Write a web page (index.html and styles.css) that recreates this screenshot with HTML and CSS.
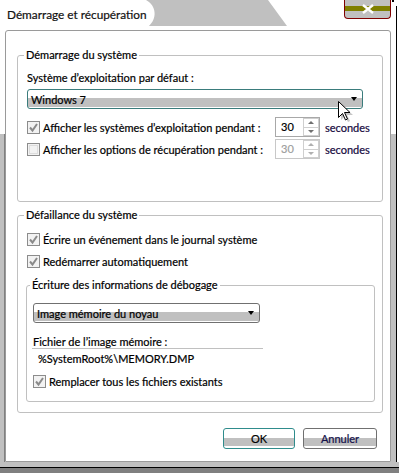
FILE: index.html
```html
<!DOCTYPE html>
<html lang="fr">
<head>
    <meta charset="UTF-8">
    <title>Démarrage et récupération</title>
    <link rel="stylesheet" href="styles.css">
</head>
<body>

    <div class="window">
        <div class="titlebar">
            <!-- Glaseffekt hinter dem Titel -->
            <svg class="glass" width="399" height="30" viewBox="0 0 399 30">
                <path d="M146 0H268L287 26H149C157 19 157 6 146 0Z" fill="#c0c0c0"/>
            </svg>
            <span class="title">Démarrage et récupération</span>
            <div class="close-btn">
                <svg width="12" height="10" viewBox="0 0 12 10">
                    <path d="M1 1L11 9M11 1L1 9" stroke="#fff" stroke-width="2.4"/>
                </svg>
            </div>
        </div>

        <div class="frame">
            <div class="edge edge-left"></div>

            <div class="panel">
                <fieldset class="group group-start">
                    <legend>Démarrage du système</legend>
                    <div class="label">Système d’exploitation par défaut :</div>
                    <div class="combo combo-os">
                        <span>Windows 7</span>
                        <span class="combo-arrow"></span>
                    </div>
                    <div class="row spin-row first">
                        <svg class="check" viewBox="0 0 13 13"><rect x="0.5" y="0.5" width="12" height="12" fill="#f2f2f2" stroke="#8c8c8c"/><path d="M3 6.5L5.5 9.5L10 3" fill="none" stroke="#8a8a8a" stroke-width="2"/></svg>
                        <span class="row-text">Afficher les systèmes d’exploitation pendant :</span>
                        <div class="spin">
                            <span class="spin-value">30</span>
                            <span class="spin-btns"><i class="up"></i><i class="down"></i></span>
                        </div>
                        <span class="unit">secondes</span>
                    </div>
                    <div class="row spin-row">
                        <svg class="check" viewBox="0 0 13 13"><rect x="0.5" y="0.5" width="12" height="12" fill="#f2f2f2" stroke="#8c8c8c"/><rect x="2.5" y="2.5" width="8" height="8" fill="none" stroke="#dcdcdc"/></svg>
                        <span class="row-text">Afficher les options de récupération pendant :</span>
                        <div class="spin disabled">
                            <span class="spin-value">30</span>
                            <span class="spin-btns"><i class="up"></i><i class="down"></i></span>
                        </div>
                        <span class="unit">secondes</span>
                    </div>
                </fieldset>

                <fieldset class="group group-failure">
                    <legend>Défaillance du système</legend>
                    <div class="row">
                        <svg class="check" viewBox="0 0 13 13"><rect x="0.5" y="0.5" width="12" height="12" fill="#f2f2f2" stroke="#8c8c8c"/><path d="M3 6.5L5.5 9.5L10 3" fill="none" stroke="#8a8a8a" stroke-width="2"/></svg>
                        <span>Écrire un événement dans le journal système</span>
                    </div>
                    <div class="row">
                        <svg class="check" viewBox="0 0 13 13"><rect x="0.5" y="0.5" width="12" height="12" fill="#f2f2f2" stroke="#8c8c8c"/><path d="M3 6.5L5.5 9.5L10 3" fill="none" stroke="#8a8a8a" stroke-width="2"/></svg>
                        <span>Redémarrer automatiquement</span>
                    </div>

                    <fieldset class="group group-debug">
                        <legend>Écriture des informations de débogage</legend>
                        <div class="combo combo-dump">
                            <span>Image mémoire du noyau</span>
                            <span class="combo-arrow"></span>
                        </div>
                        <div class="label dump-label">Fichier de l’image mémoire :</div>
                        <div class="dump-file">%SystemRoot%\MEMORY.DMP</div>
                        <div class="row debug-row">
                            <svg class="check" viewBox="0 0 13 13"><rect x="0.5" y="0.5" width="12" height="12" fill="#f2f2f2" stroke="#8c8c8c"/><path d="M3 6.5L5.5 9.5L10 3" fill="none" stroke="#8a8a8a" stroke-width="2"/></svg>
                            <span>Remplacer tous les fichiers existants</span>
                        </div>
                    </fieldset>
                </fieldset>

                <div class="buttons">
                    <button class="btn btn-ok">OK</button>
                    <button class="btn btn-cancel">Annuler</button>
                </div>
            </div>

            <div class="edge edge-right"></div>
        </div>

        <div class="bottom-edge"></div>

        <!-- Mauszeiger über der Liste -->
        <svg class="cursor" width="16" height="22" viewBox="0 0 16 22">
            <path d="M3 3L3 19L7 15L10 21L12 20L9 14L15 14Z" fill="#a0a0a0" opacity="0.6"/>
            <path d="M0.5 0.5L0.5 16.5L4.5 12.5L7.5 19L9.5 18L6.5 11.5L12 11.5Z" fill="#fff" stroke="#000"/>
        </svg>
    </div>

</body>
</html>
```

FILE: styles.css
```css
/* Allgemeine Stile */
body {
    margin: 0;
    font-family: Lato, "Open Sans", sans-serif;
    font-size: 11px;
    color: #000;
    white-space: nowrap;
    -webkit-text-stroke: 0.2px currentColor;
}

.window {
    position: relative;
    width: 399px;
    height: 473px;
    display: flex;
    flex-direction: column;
    background:
        linear-gradient(#fff, #fff) 396px 0 / 1px 6px no-repeat,
        linear-gradient(#000, #000) 396px 0 / 1px 100% no-repeat,
        linear-gradient(#000, #000) 392px 0 / 2px 2px no-repeat,
        #fff;
}

/* Titelleiste */
.titlebar {
    position: relative;
    height: 30px;
    flex: none;
    display: flex;
    align-items: flex-start;
}

.glass {
    position: absolute;
    left: 0;
    top: 0;
}

.title {
    position: relative;
    padding: 8px 0 0 7px;
    font-size: 11.8px;
    line-height: 14px;
    color: #111;
}

.close-btn {
    position: relative;
    flex: none;
    width: 47px;
    height: 19px;
    box-sizing: border-box;
    margin-left: auto;
    margin-right: 8px;
    border: 1px solid #800000;
    border-top: none;
    border-radius: 0 0 4px 4px;
    background: linear-gradient(#c0c0c0 0 6px, #808000 6px 11px, #c0c0c0 11px);
    display: flex;
    align-items: center;
    justify-content: center;
}

/* Rahmen */
.frame {
    display: flex;
    height: 432px;
    flex: none;
}

.edge {
    width: 5px;
    flex: none;
}

.edge-left {
    background:
        linear-gradient(#808080, #808080) 4px 104px / 1px 100% no-repeat,
        linear-gradient(#c0c0c0, #c0c0c0) 0 104px / 4px 100% no-repeat;
}

.edge-right {
    background: linear-gradient(#c0c0c0, #c0c0c0) 0 104px / 5px 100% no-repeat;
}

.bottom-edge {
    height: 11px;
    flex: none;
    background: linear-gradient(to bottom, #c0c0c0 0 5px, #000 5px 6px, #808080 6px);
}

.panel {
    width: 386px;
    flex: none;
    box-sizing: border-box;
    border: 1px solid #9a9a9a;
    border-radius: 3px 3px 0 0;
    padding: 17px 13px 0 11px;
}

/* Gruppen */
.group {
    margin: 0;
    border: 1px solid #c0c0c0;
    border-radius: 3px;
    min-width: 0;
    box-sizing: border-box;
}

.group legend {
    padding: 0 2px;
    margin-left: -3px;
    line-height: 14px;
}

.group-start {
    width: 366px;
    padding: 9px 9px 42px 9px;
}

.group-failure {
    width: 366px;
    margin-top: 6px;
    padding: 6px 9px 10px 9px;
}

.group-debug {
    width: 349px;
    margin: 6px 0 0 -1px;
    padding: 11px 6px 9px 6px;
}

.label {
    line-height: 14px;
}

/* Kombinationsfelder */
.combo {
    display: flex;
    align-items: center;
    height: 20px;
    box-sizing: border-box;
    border: 1px solid #707070;
    border-radius: 3px;
    background: linear-gradient(#fff 0 8px, #c0c0c0 8px 17px, #fff 17px);
    padding: 0 5px 0 3px;
}

.combo-os {
    width: 336px;
    margin-top: 4px;
    border-color: #3a7c7c;
}

.combo-dump {
    width: 227px;
}

.combo-arrow {
    margin-left: auto;
    border-left: 3.5px solid transparent;
    border-right: 3.5px solid transparent;
    border-top: 4px solid #000;
}

/* Zeilen mit Kontrollkästchen */
.row {
    display: flex;
    align-items: center;
    height: 22px;
}

.check {
    width: 13px;
    height: 13px;
    margin-right: 3px;
    flex: none;
}

.spin-row {
    height: 20px;
    margin-top: 2px;
}

.spin-row.first {
    margin-top: 8px;
}

.row-text {
    width: 232px;
    flex: none;
}

.spin {
    display: flex;
    flex: none;
    width: 45px;
    height: 20px;
    box-sizing: border-box;
    border: 1px solid #a8a8a8;
}

.spin-value {
    flex: 1;
    padding-left: 5px;
    line-height: 18px;
}

.spin-btns {
    width: 16px;
    display: flex;
    flex-direction: column;
}

.spin-btns i {
    flex: 1;
    border: 1px solid #cfcfcf;
    display: flex;
    align-items: center;
    justify-content: center;
}

.spin-btns i + i {
    border-top: none;
}

.spin-btns .up::after {
    content: "";
    border-left: 3px solid transparent;
    border-right: 3px solid transparent;
    border-bottom: 3px solid #707070;
}

.spin-btns .down::after {
    content: "";
    border-left: 3px solid transparent;
    border-right: 3px solid transparent;
    border-top: 3px solid #707070;
}

.spin.disabled {
    border-color: #c8c8c8;
}

.spin.disabled .spin-value {
    color: #a0a0a0;
}

.spin.disabled .spin-btns i::after {
    border-top-color: #b0b0b0;
    border-bottom-color: #b0b0b0;
}

.unit {
    margin-left: 5px;
    color: #160a40;
}

/* Speicherabbild */
.dump-label {
    margin-top: 13px;
    line-height: 12px;
}

.dump-file {
    margin-left: -1px;
    width: 231px;
    height: 21px;
    box-sizing: border-box;
    border-top: 1px solid #c0c0c0;
    padding-left: 6px;
    line-height: 20px;
}

.debug-row {
    margin-top: 1px;
}

/* Schaltflächen */
.buttons {
    display: flex;
    justify-content: flex-end;
    gap: 8px;
    margin-top: 15px;
}

.btn {
    height: 21px;
    padding: 0;
    font: inherit;
    color: #000;
    border: 1px solid #707070;
    border-radius: 3px;
    background: linear-gradient(#fff 0 9px, #c0c0c0 9px 17px, #fff 17px);
}

.btn-ok {
    width: 72px;
    border-color: #2f8c8c;
}

.btn-cancel {
    width: 74px;
    color: #14104a;
}

.cursor {
    position: absolute;
    left: 338px;
    top: 101px;
}
```
